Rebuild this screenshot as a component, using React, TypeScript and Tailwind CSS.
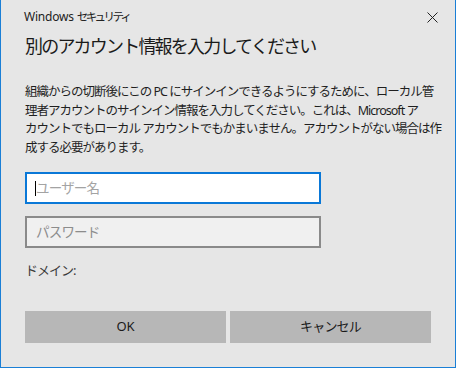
const font = { fontFamily: '"Noto Sans", "Noto Sans CJK JP", sans-serif' };

const paragraph = [
  "組織からの切断後にこの PC にサインインできるようにするために、ローカル管",
  "理者アカウントのサインイン情報を入力してください。これは、Microsoft ア",
  "カウントでもローカル アカウントでもかまいません。アカウントがない場合は作",
  "成する必要があります。",
];

const App = () => {
  return (
    <div
      style={font}
      className="w-[456px] h-[368px] bg-[#e6e6e6] border-l border-r border-b border-[#1a7fd6] text-[#1a1a1a] overflow-hidden"
    >
      <div className="flex items-center justify-between h-[34px]">
        <span className="pl-[23px] text-[12px] text-[#222]">
          <span className="tracking-[-0.2px]">Windows </span>
          <span className="text-[11.5px] tracking-[-2.6px]">セキュリティ</span>
        </span>
        <div className="w-[46px] h-[34px] flex items-center justify-center">
          <svg width="11" height="11" viewBox="0 0 11 11">
            <path d="M0.5 0.5 L10.5 10.5 M10.5 0.5 L0.5 10.5" stroke="#222" strokeWidth="1" />
          </svg>
        </div>
      </div>

      <div className="px-[24px]">
        <h1 className="text-[18px] leading-[24px] tracking-[-1.8px] font-normal text-[#1a1a1a]">
          別のアカウント情報を入力してください
        </h1>

        <div className="mt-[25px] text-[12.5px] leading-[18.5px] tracking-[-1px] text-[#1f1f1f] whitespace-nowrap">
          {paragraph.map((line) => (
            <div key={line}>{line}</div>
          ))}
        </div>

        <div className="mt-[15px] w-[296px] h-[32px] bg-white border-2 border-[#0a78d7] flex items-center pl-[8px]">
          <span className="w-px h-[15px] bg-black" />
          <span className="text-[13.5px] tracking-[-0.8px] text-[#a3a3a3]">ユーザー名</span>
        </div>

        <div className="mt-[12px] w-[296px] h-[32px] bg-[#f0f0f0] border-2 border-[#8a8a8a] flex items-center pl-[9px]">
          <span className="text-[13.5px] tracking-[-0.8px] text-[#8c8c8c]">パスワード</span>
        </div>

        <div className="mt-[13px] text-[13px] leading-[18px] tracking-[-1px] text-[#3a3a3a]">ドメイン:</div>

        <div className="mt-[32px] flex gap-[4px]">
          <button className="flex-1 h-[32px] bg-[#b7b7b7] text-[13px] text-[#1a1a1a]">OK</button>
          <button className="flex-1 h-[32px] bg-[#b7b7b7] text-[13px] tracking-[-0.8px] text-[#1a1a1a]">キャンセル</button>
        </div>
      </div>
    </div>
  );
};

export default App;
